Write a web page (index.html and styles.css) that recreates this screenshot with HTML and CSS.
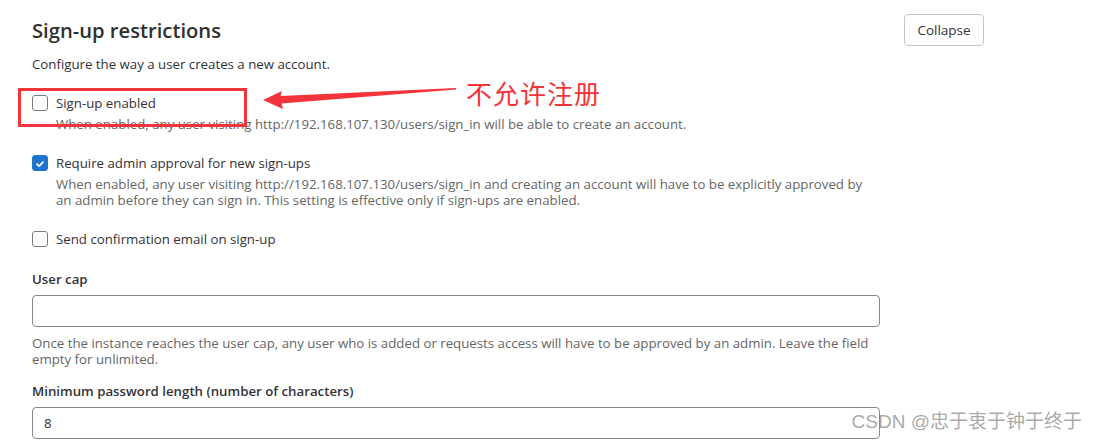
FILE: index.html
```html
<!DOCTYPE html>
<html lang="en">
<head>
<meta charset="utf-8">
<title>Sign-up restrictions</title>
<link rel="stylesheet" href="styles.css">
</head>
<body>
<div class="page">
  <div class="header">
    <h4 class="title">Sign-up restrictions</h4>
    <button class="btn" type="button">Collapse</button>
  </div>
  <p class="desc">Configure the way a user creates a new account.</p>

  <div class="check-group g1">
    <div class="check-row">
      <span class="cb"></span>
      <span class="cb-label">Sign-up enabled</span>
    </div>
    <p class="help indent">When enabled, any user visiting http://192.168.107.130/users/sign_in will be able to create an account.</p>
  </div>

  <div class="check-group g2">
    <div class="check-row">
      <span class="cb checked"><svg viewBox="0 0 16 16" width="16" height="16"><path d="M4.6 8.2l2.3 2.2 4.5-4.6" fill="none" stroke="#fff" stroke-width="2" stroke-linecap="round" stroke-linejoin="round"/></svg></span>
      <span class="cb-label">Require admin approval for new sign-ups</span>
    </div>
    <p class="help indent">When enabled, any user visiting http://192.168.107.130/users/sign_in and creating an account will have to be explicitly approved by<br>an admin before they can sign in. This setting is effective only if sign-ups are enabled.</p>
  </div>

  <div class="check-group g3">
    <div class="check-row">
      <span class="cb"></span>
      <span class="cb-label">Send confirmation email on sign-up</span>
    </div>
  </div>

  <div class="field f1">
    <label class="field-label">User cap</label>
    <div class="input"></div>
    <p class="help">Once the instance reaches the user cap, any user who is added or requests access will have to be approved by an admin. Leave the field<br>empty for unlimited.</p>
  </div>

  <div class="field f2">
    <label class="field-label">Minimum password length (number of characters)</label>
    <div class="input">8</div>
  </div>
</div>

<div class="annot-box"></div>
<svg class="annot-arrow" width="200" height="24" viewBox="0 0 200 24">
  <polygon points="0,12 19,3 17.5,8 193,0 193,1.6 18.5,15.5 20,21" fill="#f3343a"/>
</svg>
<div class="annot-text">不允许注册</div>
<div class="watermark">CSDN @忠于衷于钟于终于</div>
</body>
</html>
```

FILE: styles.css
```css
html, body {
  margin: 0;
  padding: 0;
  background: #fff;
}
body {
  font-family: "Open Sans", "Noto Sans", "Liberation Sans", sans-serif;
  font-size: 13.25px;
  line-height: 16px;
  color: #333238;
  position: relative;
  width: 1097px;
  height: 441px;
  overflow: hidden;
}
.page {
  padding: 14px 0 0 32px;
  width: 848px;
}
.header {
  display: flex;
  align-items: center;
  height: 32px;
  width: 952px;
  justify-content: space-between;
}
.title {
  margin: 0;
  font-size: 20.2px;
  font-weight: 600;
  line-height: 34px;
  color: #303030;
}
.btn {
  width: 80px;
  height: 32px;
  border: 1px solid #c4c4c4;
  border-radius: 4px;
  background: #fff;
  font-family: inherit;
  font-size: 13.5px;
  color: #333;
  padding: 0;
}
.desc {
  margin: 10px 0 0;
}
.check-group { margin-top: 23px; }
.g2 { margin-top: 23px; }
.g3 { margin-top: 23px; }
.check-row {
  display: flex;
  align-items: center;
  gap: 8px;
  height: 16px;
}
.cb {
  width: 16px;
  height: 16px;
  box-sizing: border-box;
  border: 1px solid #7d7c82;
  border-radius: 3px;
  background: #fff;
  flex: none;
  display: flex;
}
.cb.checked {
  background: #1f75cb;
  border-color: #1f75cb;
}
.cb-label { color: #333238; }
.help {
  margin: 5px 0 0;
  color: #666;
  white-space: nowrap;
}
.indent { padding-left: 24px; }
.field { margin-top: 24px; }
.f2 { margin-top: 16px; }
.field-label {
  display: block;
  font-weight: 600;
  color: #333238;
}
.input {
  margin-top: 8px;
  height: 32px;
  box-sizing: border-box;
  border: 1px solid #89888d;
  border-radius: 4px;
  padding: 0 11px;
  line-height: 30px;
  color: #333;
  width: 848px;
}
.field .help { margin-top: 8px; }

.annot-box {
  position: absolute;
  left: 18px;
  top: 88px;
  width: 229px;
  height: 39px;
  box-sizing: border-box;
  border: 3px solid #f3343a;
}
.annot-arrow {
  position: absolute;
  left: 263px;
  top: 88px;
}
.annot-text {
  position: absolute;
  left: 466px;
  top: 76px;
  font-family: "Noto Sans CJK SC", sans-serif;
  font-size: 26px;
  line-height: 34px;
  color: #f3343a;
  letter-spacing: 1px;
}
.watermark {
  position: absolute;
  right: 15px;
  top: 409px;
  font-family: "Liberation Sans", "Noto Sans CJK SC", sans-serif;
  font-size: 19px;
  line-height: 26px;
  color: rgba(130, 130, 130, 0.7);
}
```
